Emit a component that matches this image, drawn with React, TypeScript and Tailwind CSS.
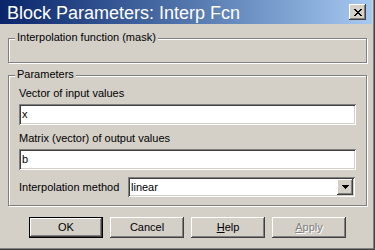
import { ReactNode } from 'react'

const font = { fontFamily: '"Liberation Sans", Arial, sans-serif' }

const raised =
  'bg-[#d4d0c8] shadow-[inset_-1px_-1px_0_#404040,inset_1px_1px_0_#ffffff,inset_-2px_-2px_0_#808080,inset_2px_2px_0_#d4d0c8]'
const sunken =
  'bg-white shadow-[inset_1px_1px_0_#808080,inset_-1px_-1px_0_#ffffff,inset_2px_2px_0_#404040,inset_-2px_-2px_0_#d4d0c8]'

function CloseGlyph() {
  const rows = ['11000011', '01100110', '00111100', '00011000', '00111100', '01100110', '11000011']
  return (
    <svg width="8" height="7" viewBox="0 0 8 7" shapeRendering="crispEdges">
      {rows.flatMap((r, y) =>
        r.split('').map((c, x) => (c === '1' ? <rect key={`${x}-${y}`} x={x} y={y} width="1" height="1" fill="#000" /> : null)),
      )}
    </svg>
  )
}

function GroupBox({ title, className, children }: { title: string; className: string; children?: ReactNode }) {
  return (
    <div
      className={`relative w-[359px] border border-[#808080] shadow-[1px_1px_0_#ffffff,inset_1px_1px_0_#ffffff] ${className}`}
    >
      <span className="absolute left-[6px] top-[-8px] bg-[#d4d0c8] px-[2px] text-[11px] leading-[13px] text-black">
        {title}
      </span>
      {children}
    </div>
  )
}

function Field({ value, className }: { value: string; className: string }) {
  return (
    <div className={`flex h-[21px] items-center px-[3px] text-[11px] text-black ${sunken} ${className}`}>{value}</div>
  )
}

function Button({ children, primary, disabled }: { children: ReactNode; primary?: boolean; disabled?: boolean }) {
  return (
    <button
      type="button"
      className={`flex h-[21px] w-[74px] items-center justify-center text-[11px] ${
        primary
          ? 'bg-[#d4d0c8] shadow-[inset_0_0_0_1px_#000000,inset_-2px_-2px_0_#404040,inset_2px_2px_0_#ffffff,inset_-3px_-3px_0_#808080]'
          : raised
      } ${disabled ? 'text-[#808080] [text-shadow:1px_1px_0_#ffffff]' : 'text-black'}`}
    >
      {children}
    </button>
  )
}

export default function App() {
  return (
    <div
      style={font}
      className="flex h-[250px] w-[375px] flex-col bg-[#d4d0c8] shadow-[inset_-1px_-1px_0_#404040,inset_-2px_-2px_0_#808080]"
    >
      <div className="flex h-[24px] shrink-0 items-center justify-between bg-gradient-to-r from-[#0a246a] to-[#a6caf0] pl-[7px] pr-[6px] mr-[3px]">
        <span className="mt-[2px] text-[18px] leading-[22px] text-white">Block Parameters: Interp Fcn</span>
        <button type="button" className={`flex h-[16px] w-[17px] items-center justify-center ${raised}`}>
          <CloseGlyph />
        </button>
      </div>

      <div className="flex flex-col pl-[8px]">
        <GroupBox title="Interpolation function (mask)" className="mt-[14px] h-[25px]" />

        <GroupBox title="Parameters" className="mt-[12px] h-[131px] pl-[10px] pt-[11px]">
          <div className="text-[11px] leading-[13px] text-black">Vector of input values</div>
          <Field value="x" className="mt-[4px] w-[337px]" />
          <div className="mt-[7px] text-[11px] leading-[13px] text-black">Matrix (vector) of output values</div>
          <Field value="b" className="mt-[4px] w-[337px]" />
          <div className="mt-[7px] flex items-center">
            <span className="w-[109px] text-[11px] leading-[13px] text-black">Interpolation method</span>
            <div className={`flex h-[20px] w-[227px] items-center justify-between pl-[3px] pr-[2px] text-[11px] text-black ${sunken}`}>
              <span>linear</span>
              <div className={`flex h-[16px] w-[16px] items-center justify-center ${raised}`}>
                <svg width="7" height="4" viewBox="0 0 7 4" shapeRendering="crispEdges">
                  <path d="M0 0h7v1h-1v1h-1v1h-1v1h-1v-1h-1v-1h-1v-1h-1z" fill="#000" />
                </svg>
              </div>
            </div>
          </div>
        </GroupBox>

        <div className="ml-[21px] mt-[11px] flex gap-[7px]">
          <Button primary>OK</Button>
          <Button>Cancel</Button>
          <Button>
            <span className="underline underline-offset-[1px]">H</span>elp
          </Button>
          <Button disabled>
            <span className="underline underline-offset-[1px]">A</span>pply
          </Button>
        </div>
      </div>
    </div>
  )
}
